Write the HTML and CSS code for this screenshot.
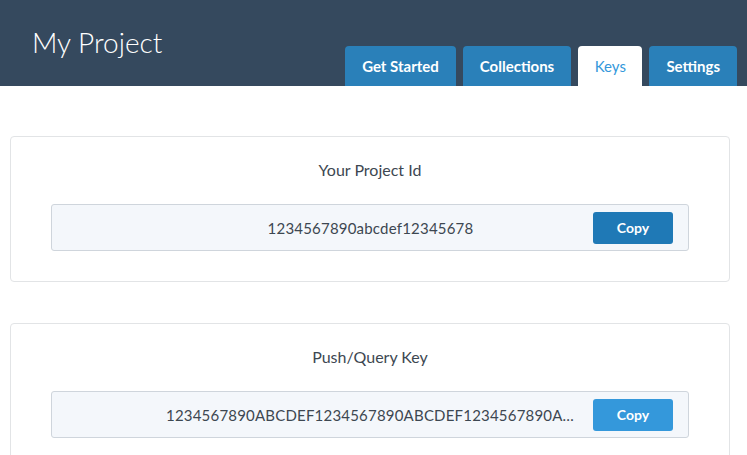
FILE: index.html
```html
<!DOCTYPE html>
<html>
<head>
<meta charset="utf-8">
<link rel="stylesheet" href="styles.css">
</head>
<body>
<header class="topbar">
  <h1 class="title">My Project</h1>
  <nav class="tabs">
    <a class="tab">Get Started</a>
    <a class="tab">Collections</a>
    <a class="tab active">Keys</a>
    <a class="tab">Settings</a>
  </nav>
</header>
<main class="content">
  <section class="card">
    <h2 class="card-title">Your Project Id</h2>
    <div class="field">
      <span class="value">1234567890abcdef12345678</span>
      <button class="copy dark">Copy</button>
    </div>
  </section>
  <section class="card">
    <h2 class="card-title">Push/Query Key</h2>
    <div class="field">
      <span class="value">1234567890ABCDEF1234567890ABCDEF1234567890ABCDEF1234567890ABCDEF</span>
      <button class="copy">Copy</button>
    </div>
  </section>
</main>
</body>
</html>
```
FILE: styles.css
```css
html, body {
  margin: 0;
  padding: 0;
  background: #ffffff;
  font-family: Lato, "Open Sans", sans-serif;
  color: #3d4751;
}

.topbar {
  display: flex;
  justify-content: space-between;
  height: 86px;
  padding: 0 10px 0 32px;
  background: #35495e;
  box-sizing: border-box;
}

.title {
  margin: 0;
  padding-top: 25px;
  font-size: 28px;
  line-height: 34px;
  font-weight: 300;
  color: #ffffff;
}

.tabs {
  display: flex;
  gap: 7px;
  align-self: flex-end;
}

.tab {
  display: flex;
  align-items: center;
  justify-content: center;
  height: 40px;
  padding: 0 17px 1px;
  box-sizing: border-box;
  border-radius: 4px 4px 0 0;
  background: #2a80b9;
  color: #ffffff;
  font-size: 15px;
  font-weight: 700;
}

.tab.active {
  padding: 0 16.5px 1px;
  background: #ffffff;
  color: #3498db;
  font-weight: 400;
}

.content {
  padding: 50px 17px 0 10px;
}

.card {
  border: 1px solid #e2e4e6;
  border-radius: 4px;
  padding: 23px 40px 30px;
  margin-bottom: 41px;
}

.card-title {
  margin: 0 0 24px;
  text-align: center;
  font-size: 16px;
  line-height: 20px;
  font-weight: 400;
  color: #3d4751;
}

.field {
  display: flex;
  align-items: center;
  height: 47px;
  box-sizing: border-box;
  border: 1px solid #cfd5dc;
  border-radius: 3px;
  background: #f4f7fb;
  padding: 0 15px 0 114px;
}

.value {
  flex: 1;
  min-width: 0;
  margin-right: 18px;
  text-align: center;
  white-space: nowrap;
  overflow: hidden;
  text-overflow: ellipsis;
  font-size: 15px;
  letter-spacing: 0.2px;
  color: #3d4751;
}

.copy {
  width: 80px;
  height: 32px;
  border: 0;
  border-radius: 3px;
  background: #3498db;
  color: #ffffff;
  font-family: inherit;
  font-size: 14px;
  font-weight: 700;
}

.copy.dark {
  background: #1f79b6;
}
```
